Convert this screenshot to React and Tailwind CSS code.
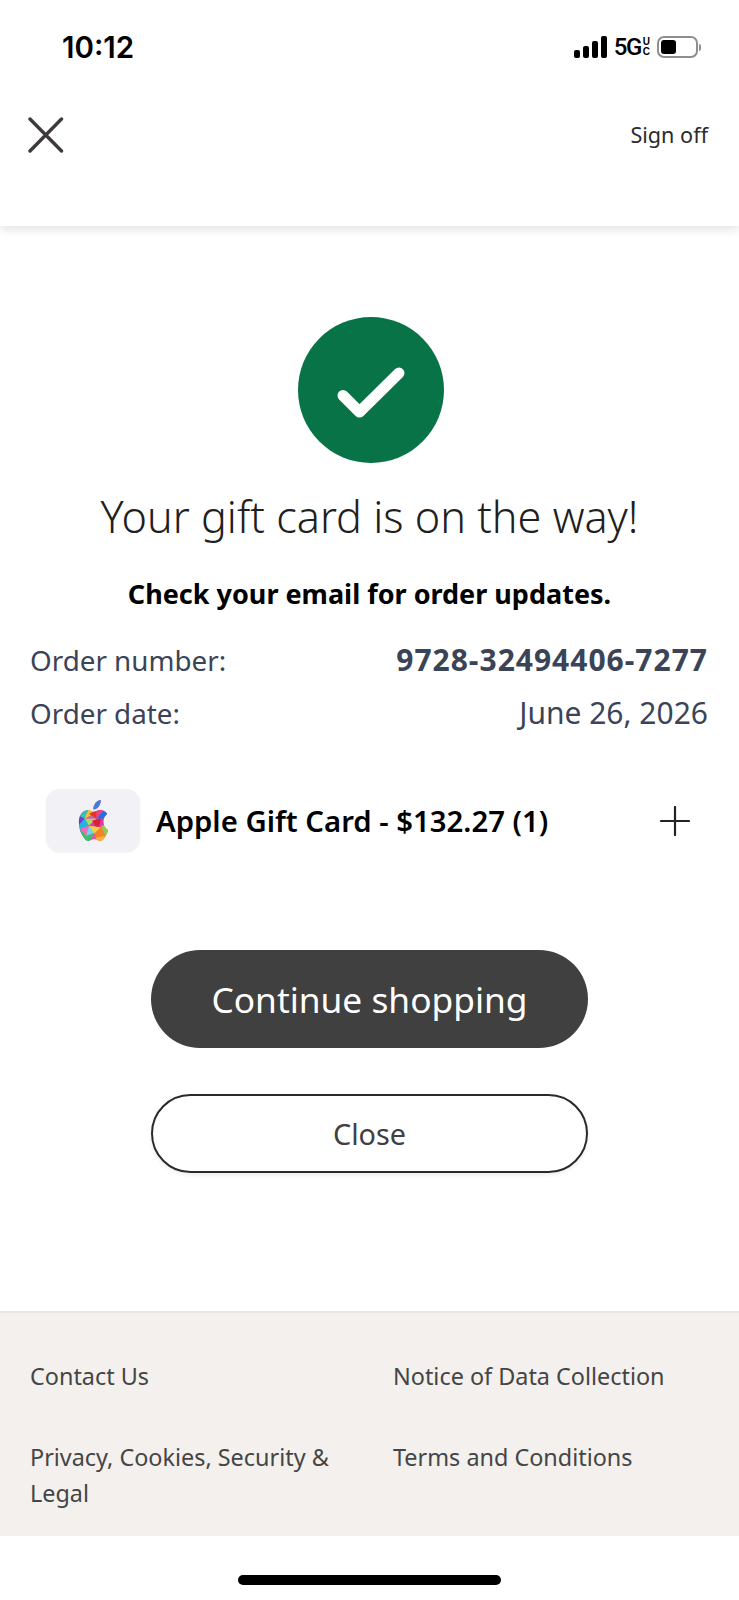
import React from "react";

const F = { fontFamily: '"Noto Sans", "Liberation Sans", sans-serif' };

function AppleLogo() {
  const d = "M12.152 6.896c-.948 0-2.415-1.078-3.96-1.04-2.04.027-3.91 1.183-4.961 3.014-2.117 3.675-.546 9.103 1.519 12.09 1.013 1.454 2.208 3.09 3.792 3.039 1.52-.065 2.09-.987 3.935-.987 1.831 0 2.35.987 3.96.948 1.637-.026 2.676-1.48 3.676-2.948 1.156-1.688 1.636-3.325 1.662-3.415-.039-.013-3.182-1.221-3.22-4.857-.026-3.04 2.48-4.494 2.597-4.559-1.429-2.09-3.623-2.324-4.39-2.376-2-.156-3.675 1.09-4.61 1.09zM15.53 3.83c.843-1.012 1.4-2.427 1.245-3.83-1.207.052-2.662.805-3.532 1.818-.78.896-1.454 2.338-1.273 3.714 1.338.104 2.715-.688 3.559-1.701";
  const facets = [
    ["#f2a93b", "11,0 14,0 14,3 11,6"],
    ["#3b7fe0", "14,0 18,0 15,5 11,6"],
    ["#2ec4b6", "1,5 9,5 6,11 1,9"],
    ["#f4c430", "9,5 14,7 6,11"],
    ["#f0407f", "14,5 20,5 14,11"],
    ["#e5322d", "14,6 14,11 9,8"],
    ["#1f6fe5", "20,5 24,5 24,11 14,11"],
    ["#9be15d", "6,11 14,11 9,15"],
    ["#e637a8", "14,11 24,11 17,16 9,15"],
    ["#d81f3d", "11,12 17,11 15,18"],
    ["#6a3fd6", "0,8 6,11 2,15 0,13"],
    ["#1fb6e0", "6,11 9,15 3,17 2,15"],
    ["#4a5be8", "0,14 3,17 6,24 0,24"],
    ["#f06bb5", "3,17 9,15 7,21"],
    ["#35c46a", "3,17 7,21 13,19 9,24 5,24"],
    ["#7ad0e8", "7,21 9,15 13,19"],
    ["#f7d046", "9,15 17,16 13,20"],
    ["#f5822a", "13,19 18,15 20,21 14,24"],
    ["#8ad14a", "17,15 24,14 24,22 20,21"],
    ["#f7b733", "14,22 20,21 18,24 13,24"],
  ];
  return (
    <svg viewBox="1 0 22 24" className="w-[33px] h-[41px]" preserveAspectRatio="none">
      <defs>
        <clipPath id="apple-clip"><path d={d} /></clipPath>
      </defs>
      <g clipPath="url(#apple-clip)">
        <rect width="24" height="24" fill="#d65fa8" />
        {facets.map(([c, p]) => <polygon key={p} fill={c} points={p} />)}
      </g>
    </svg>
  );
}

function StatusBar() {
  return (
    <div className="flex items-center justify-between h-[36px] mt-[29px] pl-[62px] pr-[38px]">
      <span className="text-[29.5px] leading-[36px] font-semibold text-black" style={{ fontFamily: '"Inter", sans-serif' }}>10:12</span>
      <div className="flex items-center">
        <svg width="33" height="22" viewBox="0 0 33 22" fill="#000">
          <rect x="0" y="14" width="6" height="8" rx="2" />
          <rect x="9" y="10" width="6" height="12" rx="2" />
          <rect x="18" y="5" width="6" height="17" rx="2" />
          <rect x="27" y="0" width="6" height="22" rx="2" />
        </svg>
        <span className="ml-[7px] text-[24px] leading-[24px] font-medium text-black" style={{ fontFamily: 'Roboto, sans-serif', letterSpacing: "-1.5px" }}>5G</span>
        <span className="flex flex-col ml-[2px] text-[10px] leading-[10px] font-bold text-black" style={{ fontFamily: '"Liberation Sans", sans-serif' }}>
          <span>U</span><span>C</span>
        </span>
        <div className="ml-[7px] flex items-center">
          <div className="w-[41px] h-[22px] rounded-[7px] border-[2px] border-[#8e8e8e] p-[2px]">
            <div className="w-[15px] h-full rounded-[3px] bg-black" />
          </div>
          <div className="ml-[1px] w-[2px] h-[7px] rounded-r-full bg-[#8e8e8e]" />
        </div>
      </div>
    </div>
  );
}

function Row({ label, value, bold }) {
  return (
    <div className="h-[53px] flex items-baseline justify-between text-[#3b4457] text-[27.8px] leading-[53px]">
      <span>{label}</span>
      <span className={bold ? "font-bold text-[30px] tracking-[1px]" : "text-[30px]"}>{value}</span>
    </div>
  );
}

export default function App() {
  return (
    <div className="w-[739px] h-[1600px] flex flex-col bg-white overflow-hidden" style={F}>
      <header className="h-[226px] bg-white shadow-[0_3px_10px_rgba(0,0,0,0.12)] relative">
        <StatusBar />
        <div className="flex items-center justify-between pl-[28px] pr-[31px] mt-[52px]">
          <svg width="36" height="36" viewBox="0 0 36 36" fill="none" stroke="#3e3a39" strokeWidth="3.4" strokeLinecap="round">
            <path d="M2 2 L33.5 34 M33.5 2 L2 34" />
          </svg>
          <span className="text-[21.6px] leading-[32px] text-[#2b2b2b]">Sign off</span>
        </div>
      </header>

      <main className="flex-1 flex flex-col items-center">
        <div className="mt-[91px] ml-[2px] w-[146px] h-[146px] rounded-full bg-[#087346] flex items-center justify-center">
          <svg width="70" height="60" viewBox="0 0 70 60" fill="none" stroke="#fff" strokeWidth="11" strokeLinecap="round" strokeLinejoin="round">
            <path d="M7 35.5 L23.5 52 L63 13" />
          </svg>
        </div>
        <h1 className="mt-[25px] text-[43.2px] leading-[58px] font-light text-[#1f1f1f]">Your gift card is on the way!</h1>
        <p className="mt-[30px] text-[27px] leading-[36px] font-bold text-black">Check your email for order updates.</p>
        <div className="w-full pl-[30px] pr-[31px] mt-[21px]">
          <Row label="Order number:" value="9728-32494406-7277" bold />
          <Row label="Order date:" value="June 26, 2026" />
        </div>
        <div className="w-full flex items-center pl-[46px] pr-[49px] mt-[50px]">
          <div className="w-[94px] h-[63px] rounded-[14px] bg-[#f1f1f6] flex items-center justify-center shadow-[0_1px_2px_rgba(0,0,0,0.05)]">
            <AppleLogo />
          </div>
          <span className="ml-[16px] flex-1 text-[29.3px] leading-[36px] font-semibold text-black">Apple Gift Card - $132.27 (1)</span>
          <svg width="30" height="30" viewBox="0 0 30 30" stroke="#222" strokeWidth="2.2" strokeLinecap="round">
            <path d="M15 1 V29 M1 15 H29" />
          </svg>
        </div>
        <button className="mt-[98px] w-[437px] h-[98px] rounded-full bg-[#404040] text-white text-[35.3px]">Continue shopping</button>
        <button className="mt-[46px] w-[437px] h-[79px] rounded-full border-[2px] border-[#2a2a2a] bg-white text-[#404040] text-[28.8px] shadow-[0_2px_4px_rgba(0,0,0,0.08)]">Close</button>
      </main>

      <footer className="h-[225px] bg-[#f3f0ed] border-t-[2px] border-[#e6e6e6] pl-[30px] pr-[31px] pt-[45px] grid grid-cols-[363px_1fr] content-start text-[23.4px] leading-[36px] text-[#454545]">
        <span className="mb-[45px]">Contact Us</span>
        <span>Notice of Data Collection</span>
        <span>Privacy, Cookies, Security &amp; Legal</span>
        <span>Terms and Conditions</span>
      </footer>
      <div className="h-[64px] flex justify-center pt-[39px]">
        <div className="w-[263px] h-[10px] rounded-full bg-black" />
      </div>
    </div>
  );
}
